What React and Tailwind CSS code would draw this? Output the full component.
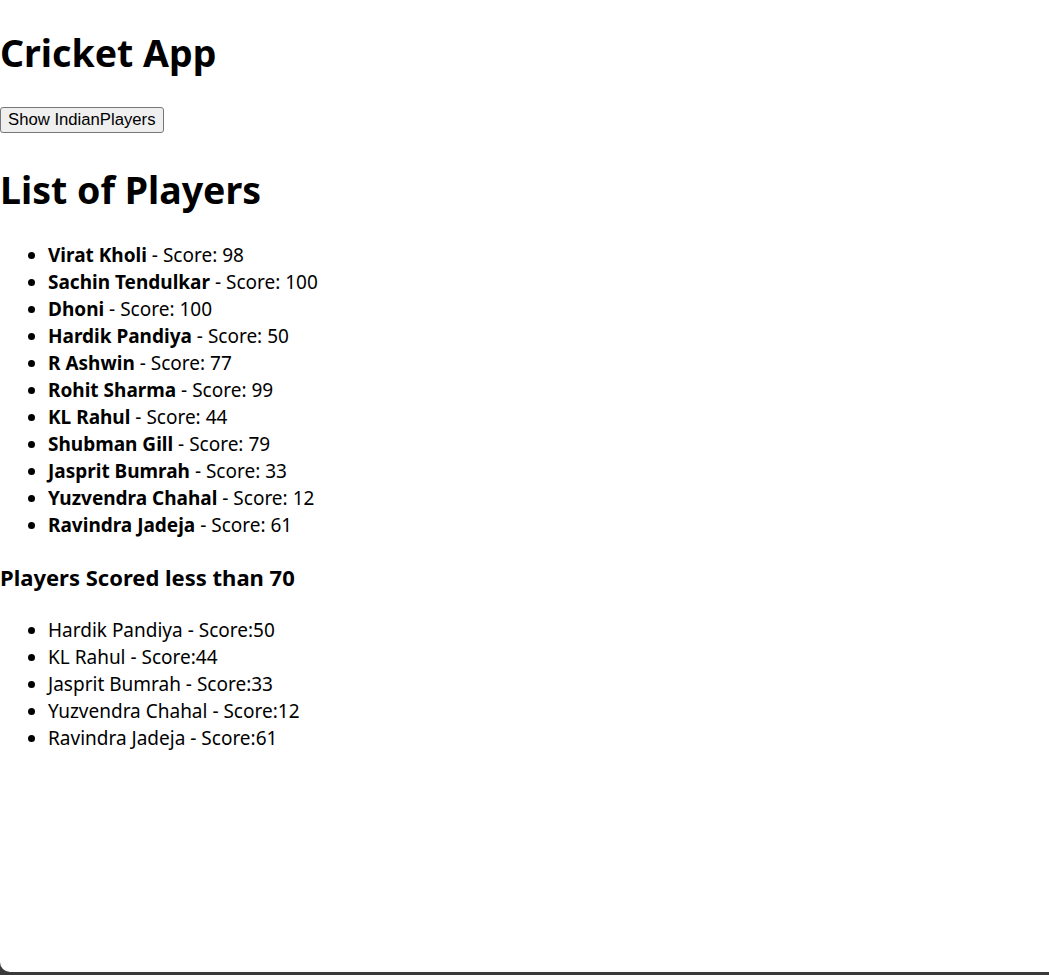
import { useState } from "react";

const players = [
  { name: "Virat Kholi", score: 98 },
  { name: "Sachin Tendulkar", score: 100 },
  { name: "Dhoni", score: 100 },
  { name: "Hardik Pandiya", score: 50 },
  { name: "R Ashwin", score: 77 },
  { name: "Rohit Sharma", score: 99 },
  { name: "KL Rahul", score: 44 },
  { name: "Shubman Gill", score: 79 },
  { name: "Jasprit Bumrah", score: 33 },
  { name: "Yuzvendra Chahal", score: 12 },
  { name: "Ravindra Jadeja", score: 61 },
];

function App() {
  const [showIndian, setShowIndian] = useState(false);

  const lowScorers = players.filter((p) => p.score < 70);

  return (
    <div className="h-[975px] bg-[#3a3a3a]">
      <div className="h-[972px] bg-white rounded-bl-[10px] text-black font-['Noto_Sans',sans-serif]">
        <h1 className="pt-[25px] text-[37.5px] leading-[56px] font-bold">Cricket App</h1>
        <button
          onClick={() => setShowIndian(!showIndian)}
          className="mt-[26px] h-[26px] px-[7px] bg-[#efefef] border border-[#767676] rounded-[3px] text-[16.7px] leading-[20px] font-['Liberation_Sans',sans-serif]"
        >
          Show IndianPlayers
        </button>
        <h2 className="mt-[29px] text-[37.5px] leading-[56px] font-bold">List of Players</h2>
        <ul className="mt-[24px] pl-[48px] list-disc text-[19px] leading-[27px]">
          {players.map((item) => (
            <li key={item.name}>
              <span className="font-bold">{item.name}</span> - Score: {item.score}
            </li>
          ))}
        </ul>
        <h3 className="mt-[23px] text-[22px] leading-[31px] font-bold">Players Scored less than 70</h3>
        <ul className="mt-[24px] pl-[48px] list-disc text-[19px] leading-[27px]">
          {lowScorers.map((item) => (
            <li key={item.name}>
              {item.name} - Score:{item.score}
            </li>
          ))}
        </ul>
      </div>
    </div>
  );
}

export default App;
